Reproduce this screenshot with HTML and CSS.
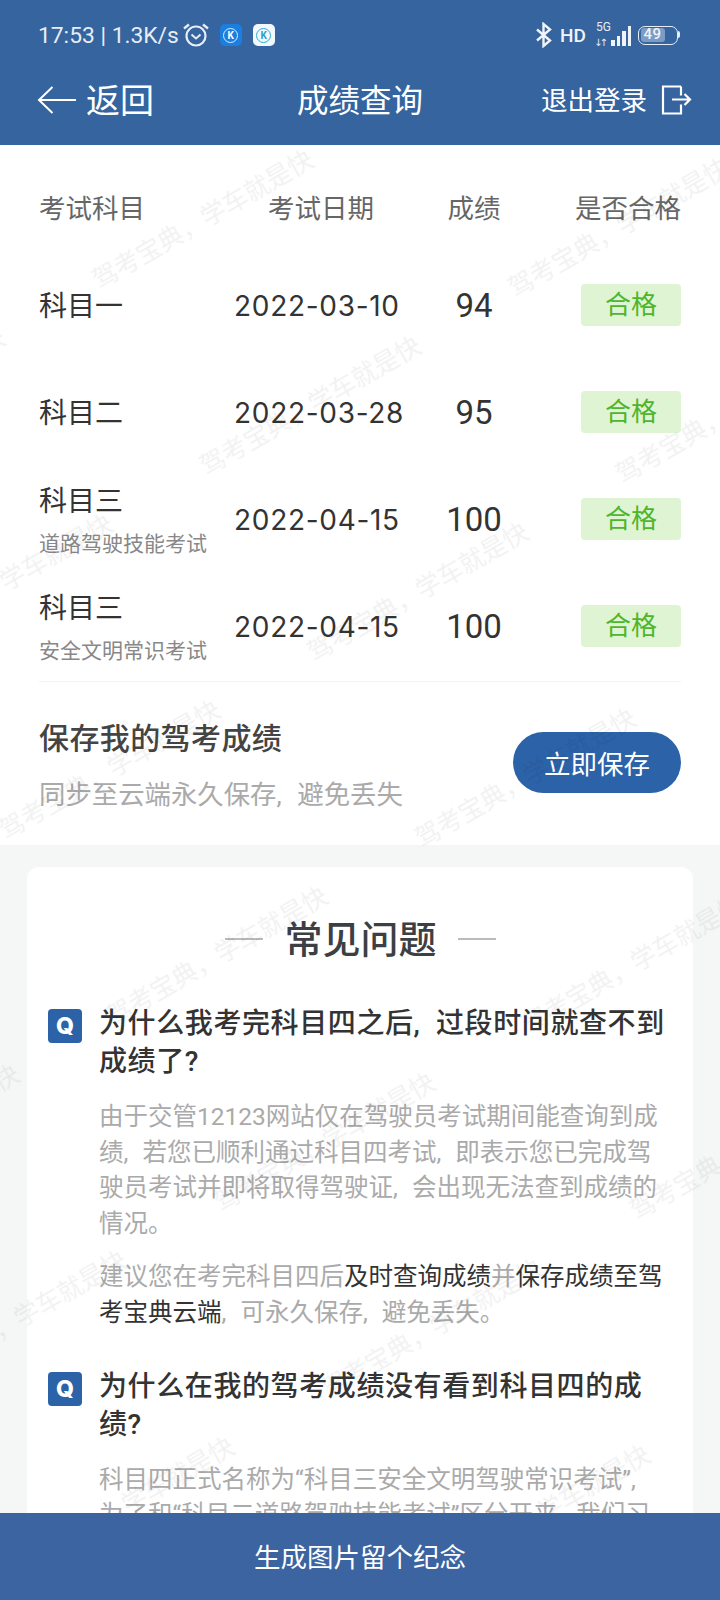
FILE: index.html
```html
<!DOCTYPE html>
<html lang="zh-CN">
<head>
    <meta charset="UTF-8">
    <title>成绩查询</title>
    <link rel="stylesheet" href="styles.css">
</head>
<body>
    <div class="page">
        <!-- Top: status bar + nav -->
        <header class="top">
            <div class="status">
                <div class="status-left">
                    <span class="clock">17:53 | 1.3K/s</span>
                    <svg class="ic-alarm" width="28" height="26" viewBox="0 0 28 26" fill="none" stroke="#e6edf5" stroke-width="2.2">
                        <circle cx="14" cy="14" r="9.5"/>
                        <path d="M9.5 12.5l4.5 4 4.5-4" stroke-width="2"/>
                        <path d="M2 6.5L7 2.500M26 6.500L21 2.500" stroke-width="2.400"/>
                    </svg>
                    <span class="app-k app-blue"><i>K</i></span>
                    <span class="app-k app-white"><i>K</i></span>
                </div>
                <div class="status-right">
                    <svg width="18" height="26" viewBox="0 0 18 26" fill="none" stroke="#f0f4f9" stroke-width="2.400">
                        <path d="M2 7.500l13 11-6.500 5.500V2L15 7.500l-13 11"/>
                    </svg>
                    <span class="hd">HD</span>
                    <div class="signal">
                        <span class="net">5G</span>
                        <span class="arrows">↓↑</span>
                        <span class="bar b1"></span>
                        <span class="bar b2"></span>
                        <span class="bar b3"></span>
                        <span class="bar b4"></span>
                    </div>
                    <div class="battery"><span class="level">49</span></div>
                </div>
            </div>
            <nav class="nav">
                <div class="back">
                    <svg width="40" height="32" viewBox="0 0 40 32" fill="none" stroke="#fff" stroke-width="2">
                        <path d="M15.500 3L2 16l13.500 13M2 16h37"/>
                    </svg>
                    <span>返回</span>
                </div>
                <div class="title">成绩查询</div>
                <div class="logout">
                    <span>退出登录</span>
                    <svg width="32" height="32" viewBox="0 0 32 32" fill="none" stroke="#fff" stroke-width="2.200">
                        <path d="M21 2.500H3v27h18v-9M21 11.500V2.500M12 15.500h18M24.500 10l5.500 5.500-5.500 5.500"/>
                    </svg>
                </div>
            </nav>
        </header>

        <main class="main">
            <!-- Score table -->
            <section class="scores">
                <div class="row head">
                    <div>考试科目</div>
                    <div class="head-date">考试日期</div>
                    <div class="score-h">成绩</div>
                    <div class="pass-h">是否合格</div>
                </div>
                <div class="row item">
                    <div class="subject">科目一</div>
                    <div class="date">2022-03-10</div>
                    <div class="score">94</div>
                    <div class="cell-badge"><span class="badge">合格</span></div>
                </div>
                <div class="row item">
                    <div class="subject">科目二</div>
                    <div class="date">2022-03-28</div>
                    <div class="score">95</div>
                    <div class="cell-badge"><span class="badge">合格</span></div>
                </div>
                <div class="row item">
                    <div class="subject">科目三<small>道路驾驶技能考试</small></div>
                    <div class="date">2022-04-15</div>
                    <div class="score">100</div>
                    <div class="cell-badge"><span class="badge">合格</span></div>
                </div>
                <div class="row item">
                    <div class="subject">科目三<small>安全文明常识考试</small></div>
                    <div class="date">2022-04-15</div>
                    <div class="score">100</div>
                    <div class="cell-badge"><span class="badge">合格</span></div>
                </div>
                <div class="save">
                    <div>
                        <h3>保存我的驾考成绩</h3>
                        <p>同步至云端永久保存, 避免丢失</p>
                    </div>
                    <button class="save-btn">立即保存</button>
                </div>
            </section>

            <!-- FAQ -->
            <section class="faq">
                <div class="faq-card">
                    <h2 class="faq-title"><span>常见问题</span></h2>

                    <div class="qa">
                        <span class="q-icon">Q</span>
                        <div class="q-body">
                            <h4>为什么我考完科目四之后, 过段时间就查不到成绩了?</h4>
                            <p>由于交管12123网站仅在驾驶员考试期间能查询到成绩, 若您已顺利通过科目四考试, 即表示您已完成驾驶员考试并即将取得驾驶证, 会出现无法查到成绩的情况。</p>
                            <p>建议您在考完科目四后<b>及时查询成绩</b>并<b>保存成绩至驾考宝典云端</b>, 可永久保存, 避免丢失。</p>
                        </div>
                    </div>

                    <div class="qa">
                        <span class="q-icon">Q</span>
                        <div class="q-body">
                            <h4>为什么在我的驾考成绩没有看到科目四的成绩?</h4>
                            <p>科目四正式名称为“科目三安全文明驾驶常识考试”, 为了和“科目二道路驾驶技能考试”区分开来, 我们习惯称之为科目四。</p>
                        </div>
                    </div>
                </div>
            </section>

            <!-- Watermark over the content -->
            <svg class="watermark" width="720" height="1368">
                <defs>
                    <pattern id="wm" width="356" height="215" patternUnits="userSpaceOnUse" patternTransform="translate(49 58) rotate(-30)">
                        <text x="0" y="100" class="wm-text">驾考宝典，学车就是快</text>
                    </pattern>
                </defs>
                <rect width="720" height="1368" fill="url(#wm)"/>
            </svg>
        </main>

        <footer class="bottom">生成图片留个纪念</footer>
    </div>
</body>
</html>
```

FILE: styles.css
```css
* {
    box-sizing: border-box;
}
body {
    margin: 0;
    font-family: Roboto, "Noto Sans CJK SC", sans-serif;
    color: #333;
    background: #fff;
}
.page {
    display: flex;
    flex-direction: column;
    height: 100vh;
    overflow: hidden;
}

/* top */
.top {
    background: #35649f;
    color: #fff;
    height: 145px;
    flex: none;
}
.status {
    display: flex;
    justify-content: space-between;
    align-items: center;
    height: 70px;
    padding: 0 42px 0 38px;
}
.status-left, .status-right {
    display: flex;
    align-items: center;
}
.clock {
    font-size: 22.800px;
    color: #e6edf5;
    white-space: nowrap;
}
.ic-alarm {
    margin-left: 3px;
}
.app-k {
    width: 22px;
    height: 22px;
    border-radius: 5px;
    margin-left: 11px;
    display: flex;
    align-items: center;
    justify-content: center;
}
.app-k i {
    width: 15px;
    height: 15px;
    border-radius: 50%;
    font: bold 10px/13px Roboto, sans-serif;
    text-align: center;
}
.app-blue {
    background: #1b7fe0;
    margin-left: 10px;
}
.app-blue i {
    border: 1px solid #dbeeff;
    color: #fff;
}
.app-white {
    background: #f2f8fb;
}
.app-white i {
    border: 1px solid #33a9d8;
    color: #2b9fd0;
}
.status-right {
    gap: 7px;
}
.hd {
    font: 500 19px Roboto, sans-serif;
    color: #f0f4f9;
    margin-right: 1px;
}
.signal {
    position: relative;
    display: flex;
    align-items: flex-end;
    gap: 2px;
    width: 38px;
    height: 22px;
    padding-left: 17px;
}
.net {
    position: absolute;
    left: 2px;
    top: -4px;
    font: 12px Roboto, sans-serif;
    color: #e6edf5;
}
.arrows {
    position: absolute;
    left: 0;
    bottom: -2px;
    font: 10px "DejaVu Sans", sans-serif;
    letter-spacing: -3px;
    color: #e6edf5;
}
.bar {
    width: 3.500px;
    background: #f0f4f9;
}
.b1 { height: 6px; }
.b2 { height: 10px; }
.b3 { height: 15px; }
.b4 { height: 20px; }
.battery {
    position: relative;
    width: 40px;
    height: 19px;
    margin-left: -1px;
    border: 1.5px solid #e6edf5;
    border-radius: 7px;
    padding: 1.500px;
}
.battery:after {
    content: "";
    position: absolute;
    right: -3px;
    top: 4px;
    width: 2px;
    height: 7px;
    background: #e6edf5;
    border-radius: 0 2px 2px 0;
}
.level {
    display: block;
    width: 24px;
    height: 100%;
    background: #7c9cc6;
    border-radius: 3px;
    font: 500 15px/13px Roboto, sans-serif;
    color: #f0f4f9;
    padding-left: 3px;
    letter-spacing: 0.5px;
    white-space: nowrap;
}
.nav {
    display: grid;
    grid-template-columns: 1fr auto 1fr;
    align-items: center;
    height: 56px;
    padding: 0 28px;
}
.nav svg {
    margin-top: 4px;
}
.back {
    display: flex;
    align-items: center;
    gap: 9px;
    padding-left: 9px;
    font-size: 34px;
}
.title {
    font-size: 31.500px;
}
.logout {
    display: flex;
    justify-content: flex-end;
    align-items: center;
    gap: 13px;
    font-size: 26.500px;
}

/* main */
.main {
    position: relative;
    flex: 1;
    overflow: hidden;
    background: #f5f6f6;
}
.watermark {
    position: absolute;
    top: 0;
    left: 0;
    pointer-events: none;
}
.wm-text {
    font-size: 25px;
    fill: rgba(0, 0, 0, 0.055);
}
.scores {
    background: #fff;
    padding: 0 39px;
    height: 700px;
}
.row {
    display: grid;
    grid-template-columns: 195px 186px 108px 153px;
    align-items: center;
}
.head {
    height: 122px;
    font-size: 26.500px;
    color: #666;
}
.head-date {
    padding-left: 34px;
}
.score-h {
    text-align: center;
}
.pass-h {
    text-align: right;
}
.item {
    height: 107px;
}
.item:nth-child(2) {
    margin-top: -16px;
}
.subject {
    padding-top: 5px;
    font-size: 28px;
    line-height: 38px;
    color: #333;
}
.subject small {
    display: block;
    font-size: 21px;
    line-height: 30px;
    margin-top: 8px;
    color: #888;
}
.date {
    padding-top: 2px;
    font-family: Inter, sans-serif;
    font-size: 28px;
    letter-spacing: 0.7px;
    color: #333;
}
.score {
    padding-top: 2px;
    font-size: 33px;
    text-align: center;
    color: #333;
}
.cell-badge {
    display: flex;
    justify-content: flex-end;
}
.badge {
    width: 100px;
    height: 42px;
    background: #def4d2;
    border-radius: 4px;
    color: #4fb52c;
    font-size: 26px;
    line-height: 42px;
    text-align: center;
}
.save {
    display: flex;
    justify-content: space-between;
    align-items: center;
    height: 163px;
    margin-top: 2px;
    border-top: 1px solid #f3f3f3;
}
.save h3 {
    margin: 5px 0 0;
    font-size: 30px;
    font-weight: 500;
    letter-spacing: 0.4px;
    line-height: 40px;
    color: #444;
}
.save p {
    margin: 18px 0 0;
    font-size: 26.400px;
    word-spacing: 9px;
    line-height: 36px;
    color: #aaa;
}
.save-btn {
    width: 168px;
    height: 61px;
    margin-top: -1px;
    border: none;
    border-radius: 31px;
    background: #2c62a8;
    color: #fff;
    font-family: inherit;
    font-size: 26.500px;
}

/* faq */
.faq {
    padding: 22px 27px 0;
}
.faq-card {
    background: #fff;
    border-radius: 12px;
    padding: 41px 20px 0 21px;
}
.faq-title {
    display: flex;
    align-items: flex-start;
    justify-content: center;
    gap: 21px;
    margin: 0 0 35px;
    font-size: 38px;
    font-weight: 500;
    line-height: 60px;
    color: #3c4045;
}
.faq-title span {
    padding-top: 2px;
}
.faq-title:before, .faq-title:after {
    content: "";
    width: 38px;
    height: 1.500px;
    margin-top: 30px;
    background: #bbb;
}
.qa {
    display: flex;
    gap: 17px;
    margin-bottom: 19px;
}
.q-icon {
    flex: none;
    width: 34px;
    height: 34px;
    margin-top: 4px;
    border-radius: 4px;
    background: #2c62a8;
    color: #fff;
    font: 800 23px/34px Inter, sans-serif;
    text-align: center;
}
.q-body {
    flex: 1;
}
.q-body h4 {
    margin: 0 0 18px;
    font-size: 28px;
    font-weight: 500;
    letter-spacing: 0.6px;
    word-spacing: 8px;
    line-height: 38px;
    color: #333;
}
.q-body p {
    margin: 0 0 18px;
    font-size: 24.500px;
    word-spacing: 8px;
    line-height: 35.600px;
    color: #aaa;
}
.q-body b {
    font-weight: 400;
    color: #333;
}

/* bottom */
.bottom {
    flex: none;
    height: 87px;
    background: #3b64a0;
    color: #fff;
    font-size: 26.500px;
    line-height: 89px;
    text-align: center;
}
```
